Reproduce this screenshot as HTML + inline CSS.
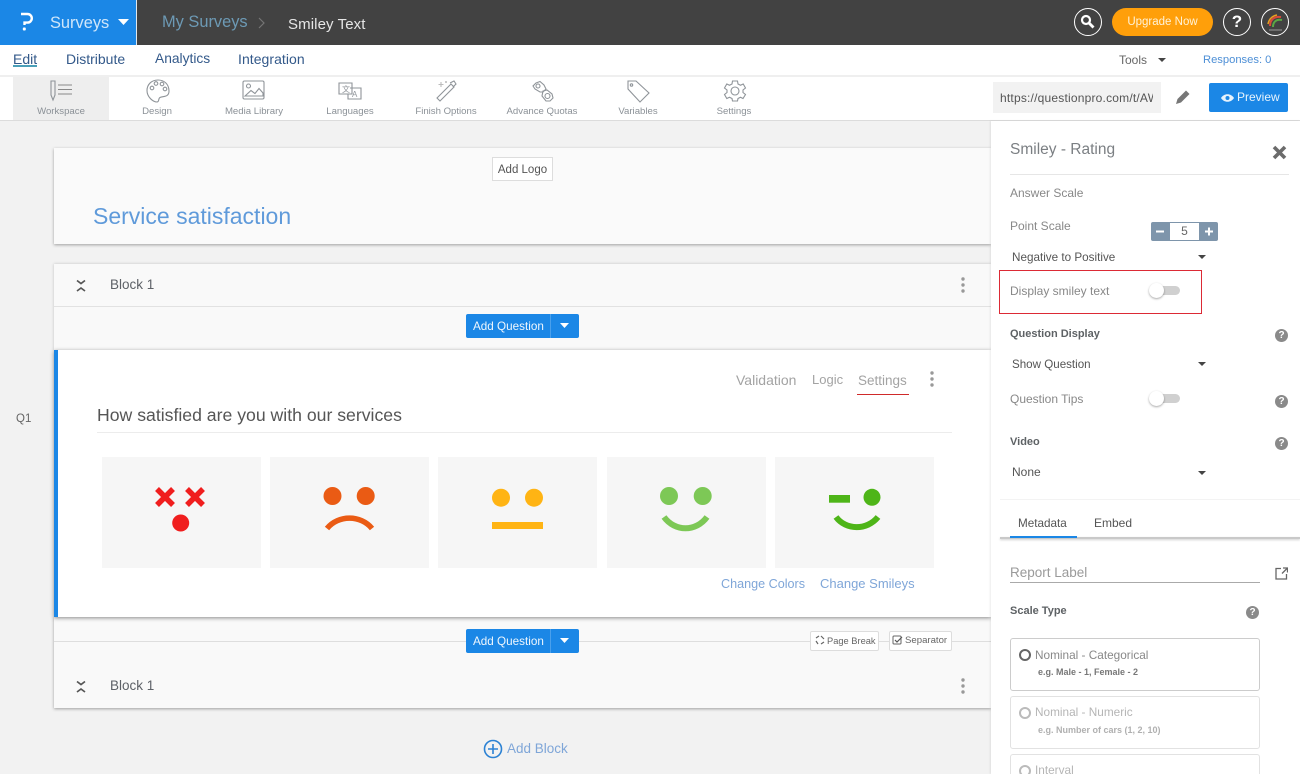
<!DOCTYPE html>
<html><head><meta charset="utf-8"><title>Smiley Text</title>
<style>
html,body{margin:0;padding:0;width:1300px;height:774px;overflow:hidden}
body{position:relative;background:#f2f2f2;font-family:"Liberation Sans",sans-serif;color:#666}
div,svg{position:absolute}
.t{white-space:nowrap;line-height:18px}
.sm{background:#f6f6f6;top:457px;width:159px;height:111px}
.toolbl{font-size:9.6px;color:#8b9197;text-align:center;width:96px;white-space:nowrap;line-height:16px}
.ic{stroke:#8f9499;fill:none;stroke-width:1.1}
.btn{background:#1b87e6;border-radius:2px;width:113px;height:24px;left:466px;color:#fff}
.radio{width:8px;height:8px;border:2px solid #666;border-radius:50%}
.box{left:1010px;width:248px;border:1px solid #ccc;border-radius:3px;background:#fff}
.q{width:13px;height:13px;border-radius:50%;background:#8a8a8a;color:#fff;font:bold 10px/13px "Liberation Sans",sans-serif;text-align:center}
.bold{font-size:11px;font-weight:bold;color:#5e6265}
</style></head><body>

<!-- top bar -->
<div style="left:0;top:0;width:1300px;height:45px;background:#424242"></div>
<div style="left:0;top:0;width:136px;height:45px;background:#1b87e6"></div>
<div style="left:136px;top:0;width:1px;height:45px;background:#dfe8ef"></div>
<svg style="left:18px;top:11px" width="18" height="22" viewBox="0 0 18 22"><path d="M3 3H9.5a4.3 4.3 0 0 1 0 8.6H6.5V14" fill="none" stroke="#fff" stroke-width="2.4"/><rect x="4.8" y="16.5" width="3" height="3" rx="1" fill="#fff"/></svg>
<div class="t" style="left:50px;top:14px;font-size:16.4px;color:#cfe6fa">Surveys</div>
<svg style="left:118px;top:19px" width="12" height="7"><path d="M0 0H11L5.5 6Z" fill="#fff"/></svg>
<div class="t" style="left:162px;top:13px;font-size:16.4px;color:#6d9ab5">My Surveys</div>
<svg style="left:258px;top:17px" width="8" height="12"><path d="M1 1L6 6L1 11" fill="none" stroke="#757575" stroke-width="1.2"/></svg>
<div class="t" style="left:288px;top:16px;font-size:15px;color:#e6e6e6;letter-spacing:.1px">Smiley Text</div>

<div style="left:1074px;top:8px;width:26px;height:26px;border:1px solid #fff;border-radius:50%"></div>
<svg style="left:1079px;top:13px" width="18" height="18"><circle cx="7" cy="7" r="4" fill="none" stroke="#fff" stroke-width="2.2"/><path d="M10 10L14.5 14.5" stroke="#fff" stroke-width="2.8"/></svg>
<div style="left:1112px;top:8px;width:101px;height:28px;background:#ff9f0a;border-radius:14px"></div>
<div class="t" style="left:1112px;top:13px;width:101px;text-align:center;font-size:11.5px;color:#fff2d8">Upgrade Now</div>
<div style="left:1223px;top:8px;width:26px;height:26px;border:1px solid #fff;border-radius:50%;color:#fff;font:bold 17px/26px 'Liberation Sans',sans-serif;text-align:center">?</div>
<div style="left:1261px;top:8px;width:26px;height:26px;border:1px solid #fff;border-radius:50%"></div>
<svg style="left:1262px;top:9px" width="26" height="26"><path d="M8 17C8 11 12 7 19 8" fill="none" stroke="#d84a3a" stroke-width="2"/><path d="M11 18C11 13 14 10 20 11" fill="none" stroke="#5aa845" stroke-width="2"/><path d="M6 15C7 10 10 7 15 6" fill="none" stroke="#e8a020" stroke-width="1.5"/><path d="M7 21H20" stroke="#9a9a9a" stroke-width="1"/></svg>

<!-- nav -->
<div style="left:0;top:45px;width:1300px;height:30px;background:#fff"></div>
<div style="left:0;top:75px;width:1300px;height:2px;background:#efefef"></div>
<div class="t" style="left:13px;top:50px;font-size:14px;color:#33598a">Edit</div>
<div style="left:13px;top:65px;width:24px;height:2px;background:#4a9fb8"></div>
<div class="t" style="left:66px;top:50px;font-size:14px;color:#33598a">Distribute</div>
<div class="t" style="left:155px;top:50px;font-size:13.8px;color:#33598a">Analytics</div>
<div class="t" style="left:238px;top:50px;font-size:14px;letter-spacing:.05px;color:#33598a">Integration</div>
<div class="t" style="left:1119px;top:51px;font-size:12px;color:#666">Tools</div>
<svg style="left:1158px;top:58px" width="9" height="5"><path d="M0 0H8L4 4Z" fill="#444"/></svg>
<div class="t" style="left:1203px;top:51px;font-size:11.2px;color:#4d8fd6">Responses: 0</div>

<!-- toolbar -->
<div style="left:0;top:77px;width:1300px;height:43px;background:#fff;border-bottom:1px solid #dcdcdc"></div>
<div style="left:13px;top:77px;width:96px;height:43px;background:#eeeeee"></div>

<svg class="ic" style="left:48px;top:80px" width="26" height="22"><path d="M3 1H7V15L5 20L3 15Z"/><path d="M10 5H24M10 9.5H24M10 14H24" stroke="#888"/></svg>
<svg class="ic" style="left:145px;top:78px" width="26" height="26"><path d="M13 2C6 2 2 7 2 12.5C2 19 8 24 12 24C14.5 24 13 20.5 15 19.5C18 18 24 19.5 24 13C24 6 19 2 13 2Z"/><circle cx="7" cy="10" r="1.8"/><circle cx="11" cy="5.5" r="1.8"/><circle cx="17" cy="6" r="1.8"/><circle cx="20" cy="11" r="1.8"/></svg>
<svg class="ic" style="left:242px;top:80px" width="24" height="22"><rect x="1" y="1" width="21" height="18" rx="1.5"/><circle cx="6.5" cy="6" r="2"/><path d="M3 16L9 10.5L13 13.5L17 8.5L21 13V16Z"/></svg>
<svg class="ic" style="left:337px;top:81px" width="26" height="20"><path d="M2 2H15V13H2Z"/><path d="M13 7H24V18H11V13"/><text x="5" y="11" font-size="8" fill="#8f9499" stroke="none" font-family="Liberation Sans, Noto Sans CJK SC, sans-serif">文</text><text x="15" y="16" font-size="8" fill="#8f9499" stroke="none" font-family="Liberation Sans, sans-serif">A</text></svg>
<svg class="ic" style="left:434px;top:79px" width="24" height="24"><path d="M3 19L17 5L20 8L6 22Z"/><path d="M16 4L20 2L22 5L19 8"/><path d="M7 3V8M4.5 5.5H9.5" stroke="#bbb"/><path d="M12 2V4M11 3H13" stroke="#bbb"/></svg>
<svg class="ic" style="left:531px;top:80px" width="24" height="24"><path d="M5 3L9 1.5L13 5L15 9L12 12L9 12L4 9L2 6Z"/><circle cx="7" cy="6" r="2"/><path d="M12 11L16 10L21 14L22 18L19 21L15 21L11 16Z"/><circle cx="16.5" cy="16" r="2.5"/></svg>
<svg class="ic" style="left:626px;top:79px" width="26" height="24"><path d="M2 2H10L23 14L14 23L2 10Z"/><circle cx="5.5" cy="6" r="1.2"/></svg>
<svg class="ic" style="left:723px;top:79px" width="24" height="24"><path d="M9.5 2H14.5L15 5L17.5 6.3L20.2 5L22.5 9L20 11V13.5L22.5 15.5L20 19.5L17.5 18.2L15 19.5L14.5 22H9.5L9 19.5L6.5 18.2L3.8 19.5L1.5 15.5L4 13.5V11L1.5 9L3.8 5L6.5 6.3L9 5Z"/><circle cx="12" cy="12" r="4"/></svg>

<div class="toolbl" style="left:13px;top:104px">Workspace</div>
<div class="toolbl" style="left:109px;top:104px">Design</div>
<div class="toolbl" style="left:206px;top:104px">Media Library</div>
<div class="toolbl" style="left:302px;top:104px">Languages</div>
<div class="toolbl" style="left:398px;top:104px">Finish Options</div>
<div class="toolbl" style="left:494px;top:104px">Advance Quotas</div>
<div class="toolbl" style="left:590px;top:104px">Variables</div>
<div class="toolbl" style="left:686px;top:104px">Settings</div>

<div style="left:993px;top:82px;width:168px;height:31px;background:#f2f2f2"></div>
<div class="t" style="left:1000px;top:89px;width:153px;overflow:hidden;font-size:12px;letter-spacing:.2px;color:#555">https://questionpro.com/t/AW22</div>
<svg style="left:1174px;top:88px" width="19" height="18"><path d="M2 16L3.5 11L12 2.5L15.5 6L7 14.5Z" fill="#777"/></svg>
<div style="left:1209px;top:83px;width:79px;height:29px;background:#1b87e6;border-radius:2px"></div>
<svg style="left:1221px;top:93px" width="13" height="10"><path d="M0 5C3 0 10 0 13 5C10 10 3 10 0 5Z" fill="#e6f2fc"/><circle cx="6.5" cy="5" r="2" fill="#1b87e6"/></svg>
<div class="t" style="left:1237px;top:88px;font-size:12px;color:#e8f3fc">Preview</div>

<!-- left cards -->
<div style="left:54px;top:148px;width:937px;height:96px;background:#fafafa;box-shadow:0 1px 3px rgba(0,0,0,.35)"></div>
<div style="left:492px;top:157px;width:59px;height:22px;background:#fff;border:1px solid #ddd"></div>
<div class="t" style="left:492px;top:161px;width:61px;text-align:center;font-size:11.5px;color:#555">Add Logo</div>
<div class="t" style="left:93px;top:203px;font-size:23px;line-height:26px;color:#5f9ada">Service satisfaction</div>

<div style="left:54px;top:264px;width:937px;height:86px;background:#f9f9f9;box-shadow:0 0 3px rgba(0,0,0,.2)"></div>
<div style="left:54px;top:306px;width:937px;height:1px;background:#e2e2e2"></div>
<svg style="left:75px;top:279px" width="12" height="14"><path d="M2 1.5L6 4.5L10 1.5M2 12L6 9L10 12" fill="none" stroke="#555" stroke-width="1.7"/></svg>
<div class="t" style="left:110px;top:276px;font-size:13.5px;color:#5d6167">Block 1</div>
<svg style="left:960px;top:276px" width="6" height="18"><circle cx="3" cy="3" r="1.7" fill="#999"/><circle cx="3" cy="9" r="1.7" fill="#999"/><circle cx="3" cy="15" r="1.7" fill="#999"/></svg>

<div class="btn" style="top:314px"></div>
<div style="left:550px;top:314px;width:1px;height:24px;background:#4aa0ec"></div>
<div class="t" style="left:473px;top:318px;font-size:11.7px;color:#eef6fd">Add Question</div>
<svg style="left:560px;top:323px" width="10" height="6"><path d="M0 0H9L4.5 5Z" fill="#fff"/></svg>

<div style="left:54px;top:617px;width:937px;height:91px;background:#f9f9f9;box-shadow:0 1px 3px rgba(0,0,0,.35)"></div>
<div style="left:54px;top:641px;width:937px;height:1px;background:#dedede"></div>
<div class="btn" style="top:629px"></div>
<div style="left:550px;top:629px;width:1px;height:24px;background:#4aa0ec"></div>
<div class="t" style="left:473px;top:633px;font-size:11.7px;color:#eef6fd">Add Question</div>
<svg style="left:560px;top:638px" width="10" height="6"><path d="M0 0H9L4.5 5Z" fill="#fff"/></svg>
<svg style="left:75px;top:680px" width="12" height="14"><path d="M2 1.5L6 4.5L10 1.5M2 12L6 9L10 12" fill="none" stroke="#555" stroke-width="1.7"/></svg>
<div class="t" style="left:110px;top:677px;font-size:13.5px;color:#5d6167">Block 1</div>
<svg style="left:960px;top:677px" width="6" height="18"><circle cx="3" cy="3" r="1.7" fill="#999"/><circle cx="3" cy="9" r="1.7" fill="#999"/><circle cx="3" cy="15" r="1.7" fill="#999"/></svg>

<div style="left:810px;top:631px;width:67px;height:18px;background:#fff;border:1px solid #ddd;border-radius:2px"></div>
<svg style="left:815px;top:635px" width="10" height="10"><path d="M1 3L4 1M6 1L9 4M9 7L6 9M3 9L1 6" stroke="#666" fill="none" stroke-width="1.2"/></svg>
<div class="t" style="left:827px;top:632px;font-size:9.3px;color:#666">Page Break</div>
<div style="left:889px;top:631px;width:61px;height:18px;background:#fff;border:1px solid #ddd;border-radius:2px"></div>
<svg style="left:892px;top:635px" width="11" height="10"><rect x="1" y="1" width="8" height="8" rx="1" fill="none" stroke="#666"/><path d="M3 5L5 7L10 2" fill="none" stroke="#555" stroke-width="1.2"/></svg>
<div class="t" style="left:905px;top:632px;font-size:9.6px;color:#666">Separator</div>

<svg style="left:483px;top:739px" width="20" height="20"><circle cx="10" cy="10" r="8.5" fill="none" stroke="#2c82d4" stroke-width="1.6"/><path d="M10 5V15M5 10H15" stroke="#2c82d4" stroke-width="1.6"/></svg>
<div class="t" style="left:507px;top:740px;font-size:13.5px;color:#7fa6d8">Add Block</div>

<div class="t" style="left:16px;top:410px;font-size:11.5px;color:#666">Q1</div>

<!-- question card -->
<div style="left:54px;top:350px;width:937px;height:267px;background:#fff;box-shadow:0 1px 4px rgba(0,0,0,.45)"></div>
<div style="left:54px;top:350px;width:4px;height:267px;background:#1b87e6"></div>
<div class="t" style="left:736px;top:371px;font-size:14px;color:#a3a3a3">Validation</div>
<div class="t" style="left:812px;top:371px;font-size:13px;color:#a3a3a3">Logic</div>
<div class="t" style="left:858px;top:372px;font-size:13.5px;color:#a3a3a3">Settings</div>
<div style="left:857px;top:394px;width:52px;height:1px;background:#cf2a2a"></div>
<svg style="left:929px;top:370px" width="6" height="18"><circle cx="3" cy="3" r="1.7" fill="#999"/><circle cx="3" cy="9" r="1.7" fill="#999"/><circle cx="3" cy="15" r="1.7" fill="#999"/></svg>
<div class="t" style="left:97px;top:405px;font-size:17.65px;line-height:20px;color:#555">How satisfied are you with our services</div>
<div style="left:97px;top:432px;width:855px;height:1px;background:#ececec"></div>

<div class="sm" style="left:102px"></div>
<div class="sm" style="left:270px"></div>
<div class="sm" style="left:438px"></div>
<div class="sm" style="left:607px"></div>
<div class="sm" style="left:775px"></div>

<svg style="left:102px;top:457px" width="159" height="111">
<path d="M55 32L71 48M71 32L55 48M85 32L101 48M101 32L85 48" stroke="#f01e1e" stroke-width="5.5"/>
<circle cx="78.7" cy="66" r="8.5" fill="#f01e1e"/></svg>
<svg style="left:270px;top:457px" width="159" height="111">
<circle cx="62.5" cy="39" r="9" fill="#ea5b14"/><circle cx="95.7" cy="39" r="9" fill="#ea5b14"/>
<path d="M57 71.5C68 57.7 91 57.7 102 71.5" fill="none" stroke="#ea5b14" stroke-width="5.5"/></svg>
<svg style="left:438px;top:457px" width="159" height="111">
<circle cx="63" cy="40.7" r="9" fill="#ffb414"/><circle cx="96" cy="40.7" r="9" fill="#ffb414"/>
<rect x="54" y="65" width="51" height="7" fill="#ffb414"/></svg>
<svg style="left:607px;top:457px" width="159" height="111">
<circle cx="62" cy="39" r="9" fill="#7dc856"/><circle cx="95.7" cy="39" r="9" fill="#7dc856"/>
<path d="M57 60C68 75 89 75 100 60" fill="none" stroke="#7dc856" stroke-width="6"/></svg>
<svg style="left:775px;top:457px" width="159" height="111">
<rect x="54" y="38" width="21" height="7.7" fill="#4eb518"/><circle cx="97" cy="40.3" r="8.5" fill="#4eb518"/>
<path d="M61 60C71 73.5 92 73.5 103 60" fill="none" stroke="#4eb518" stroke-width="6"/></svg>

<div class="t" style="left:721px;top:575px;font-size:12.6px;color:#7fa6d8">Change Colors</div>
<div class="t" style="left:820px;top:575px;font-size:13px;color:#7fa6d8">Change Smileys</div>

<!-- right panel -->
<div style="left:991px;top:121px;width:309px;height:653px;background:#fff;box-shadow:-1px 0 2px rgba(0,0,0,.08)"></div>
<div class="t" style="left:1010px;top:141px;font-size:15.5px;color:#7b7f83">Smiley - Rating</div>
<svg style="left:1272px;top:145px" width="15" height="15"><path d="M2 2L13 13M13 2L2 13" stroke="#6b6b6b" stroke-width="3.6"/></svg>
<div style="left:1010px;top:174px;width:279px;height:1px;background:#e6e6e6"></div>
<div class="t" style="left:1010px;top:184px;font-size:12px;color:#888">Answer Scale</div>
<div class="t" style="left:1010px;top:217px;font-size:12px;color:#888">Point Scale</div>
<div style="left:1151px;top:222px;width:67px;height:19px;background:#7e95ab;border-radius:2px"></div>
<div style="left:1170px;top:223px;width:29px;height:17px;background:#fff;text-align:center;font-size:12px;line-height:17px;color:#666">5</div>
<svg style="left:1155px;top:227px" width="60" height="9"><path d="M1 4.5H9M50 4.500H58M54 .5V8.5" stroke="#fff" stroke-width="2"/></svg>
<div class="t" style="left:1012px;top:249px;font-size:11.7px;color:#555">Negative to Positive</div>
<svg style="left:1198px;top:255px" width="9" height="5"><path d="M0 0H8L4 4Z" fill="#444"/></svg>
<div style="left:999px;top:270px;width:201px;height:42px;border:1px solid #dc2a35"></div>
<div class="t" style="left:1010px;top:282px;font-size:12px;color:#888">Display smiley text</div>
<div style="left:1150px;top:286px;width:30px;height:9px;background:#d0d0d0;border-radius:5px"></div>
<div style="left:1149px;top:283px;width:15px;height:15px;background:#fff;border-radius:50%;box-shadow:0 1px 2px rgba(0,0,0,.35)"></div>
<div class="t bold" style="left:1010px;top:325px">Question Display</div>
<div class="q" style="left:1275px;top:329px">?</div>
<div class="t" style="left:1012px;top:356px;font-size:11.6px;color:#555">Show Question</div>
<svg style="left:1198px;top:362px" width="9" height="5"><path d="M0 0H8L4 4Z" fill="#444"/></svg>
<div class="t" style="left:1010px;top:390px;font-size:12px;color:#888">Question Tips</div>
<div style="left:1150px;top:394px;width:30px;height:9px;background:#d0d0d0;border-radius:5px"></div>
<div style="left:1149px;top:391px;width:15px;height:15px;background:#fff;border-radius:50%;box-shadow:0 1px 2px rgba(0,0,0,.35)"></div>
<div class="q" style="left:1275px;top:395px">?</div>
<div class="t bold" style="left:1010px;top:433px">Video</div>
<div class="q" style="left:1275px;top:437px">?</div>
<div class="t" style="left:1012px;top:463px;font-size:12px;color:#555">None</div>
<svg style="left:1198px;top:471px" width="9" height="5"><path d="M0 0H8L4 4Z" fill="#444"/></svg>
<div style="left:1000px;top:499px;width:300px;height:1px;background:#f3f3f3"></div>
<div class="t" style="left:1018px;top:515px;font-size:11.7px;color:#555">Metadata</div>
<div class="t" style="left:1094px;top:514px;font-size:12px;color:#555">Embed</div>
<div style="left:1000px;top:537px;width:300px;height:2px;background:#c9c9c9;box-shadow:0 1px 2px rgba(0,0,0,.2)"></div>
<div style="left:1010px;top:536px;width:67px;height:2px;background:#1b87e6"></div>
<div class="t" style="left:1010px;top:564px;font-size:13.5px;color:#9a9a9a">Report Label</div>
<div style="left:1010px;top:582px;width:250px;height:1px;background:#aaa"></div>
<svg style="left:1275px;top:567px" width="13" height="13"><path d="M6 1.5H1V12H11.5V7M7 6.5L12 1.500M8 1H12.5V5.5" fill="none" stroke="#666" stroke-width="1.3"/></svg>
<div class="t bold" style="left:1010px;top:602px">Scale Type</div>
<div class="q" style="left:1246px;top:606px">?</div>

<div class="box" style="top:638px;height:51px"></div>
<div class="radio" style="left:1019px;top:649px"></div>
<div class="t" style="left:1035px;top:646px;font-size:11.8px;color:#888">Nominal - Categorical</div>
<div class="t" style="left:1038px;top:663px;font-size:9px;font-weight:bold;color:#777">e.g. Male - 1, Female - 2</div>
<div class="box" style="top:696px;height:51px;border-color:#e2e2e2"></div>
<div class="radio" style="left:1019px;top:707px;border-color:#bbb"></div>
<div class="t" style="left:1035px;top:703px;font-size:11.8px;color:#b5b5b5">Nominal - Numeric</div>
<div class="t" style="left:1038px;top:721px;font-size:9px;font-weight:bold;color:#b0b0b0">e.g. Number of cars (1, 2, 10)</div>
<div class="box" style="top:754px;height:30px;border-color:#e2e2e2"></div>
<div class="radio" style="left:1019px;top:765px;border-color:#bbb"></div>
<div class="t" style="left:1035px;top:761px;font-size:11.8px;color:#b5b5b5">Interval</div>

</body></html>
